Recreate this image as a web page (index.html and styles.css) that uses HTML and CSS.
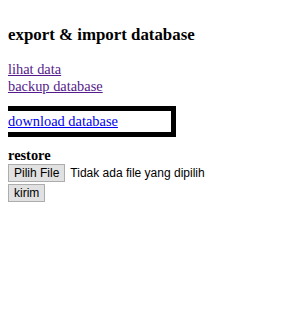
FILE: index.html
```html
<!DOCTYPE html>
<html lang="id">
<head>
<meta charset="UTF-8">
<meta name="viewport" content="width=device-width, initial-scale=1.0">
<title>export &amp; import database</title>
<link rel="stylesheet" href="styles.css">
</head>
<body>
<h3>export &amp; import database</h3>

<a href="#lihat" class="visited">lihat data</a><br>
<a href="#backup" class="visited">backup database</a>

<!-- tombol download dikasih kotak -->
<div class="download-box">
    <a href="#download">download database</a>
</div>

<form class="restore-form" action="#" method="post">
    <div class="restore-title">restore</div>
    <div class="file-row">
        <label class="file-btn">Pilih File<input type="file" name="file"></label>
        <span class="file-name">Tidak ada file yang dipilih</span>
    </div>
    <button type="submit" class="btn">kirim</button>
</form>
</body>
</html>
```

FILE: styles.css
```css
body {
    margin: 8px;
    font-family: "Liberation Serif", "Times New Roman", serif;
    font-size: 14.4px;
    line-height: 17px;
    color: #000;
    background: #fff;
}

h3 {
    font-size: 16.85px;
    line-height: 19px;
    margin: 17px 0;
}

a {
    color: #0000ee;
}

a.visited {
    color: #551a8b;
}

.download-box {
    width: 163px;
    height: 21px;
    margin-top: 16px;
    padding-top: 2px;
    box-sizing: border-box;
    outline: 5px solid #000;
}

.restore-form {
    margin-top: 15px;
}

.restore-title {
    font-weight: bold;
}

.file-row {
    display: flex;
    align-items: center;
    gap: 5px;
}

.file-btn,
.btn {
    display: inline-block;
    font-family: "Liberation Sans", Arial, sans-serif;
    font-size: 12px;
    line-height: 16px;
    padding: 0 5px;
    color: #000;
    background: #e1e1e1;
    border: 1px solid #adadad;
    cursor: pointer;
}

.file-btn input {
    display: none;
}

.file-name {
    font-family: "Liberation Sans", Arial, sans-serif;
    font-size: 12px;
}

.btn {
    display: block;
    margin: 2px 0 0;
}
```
